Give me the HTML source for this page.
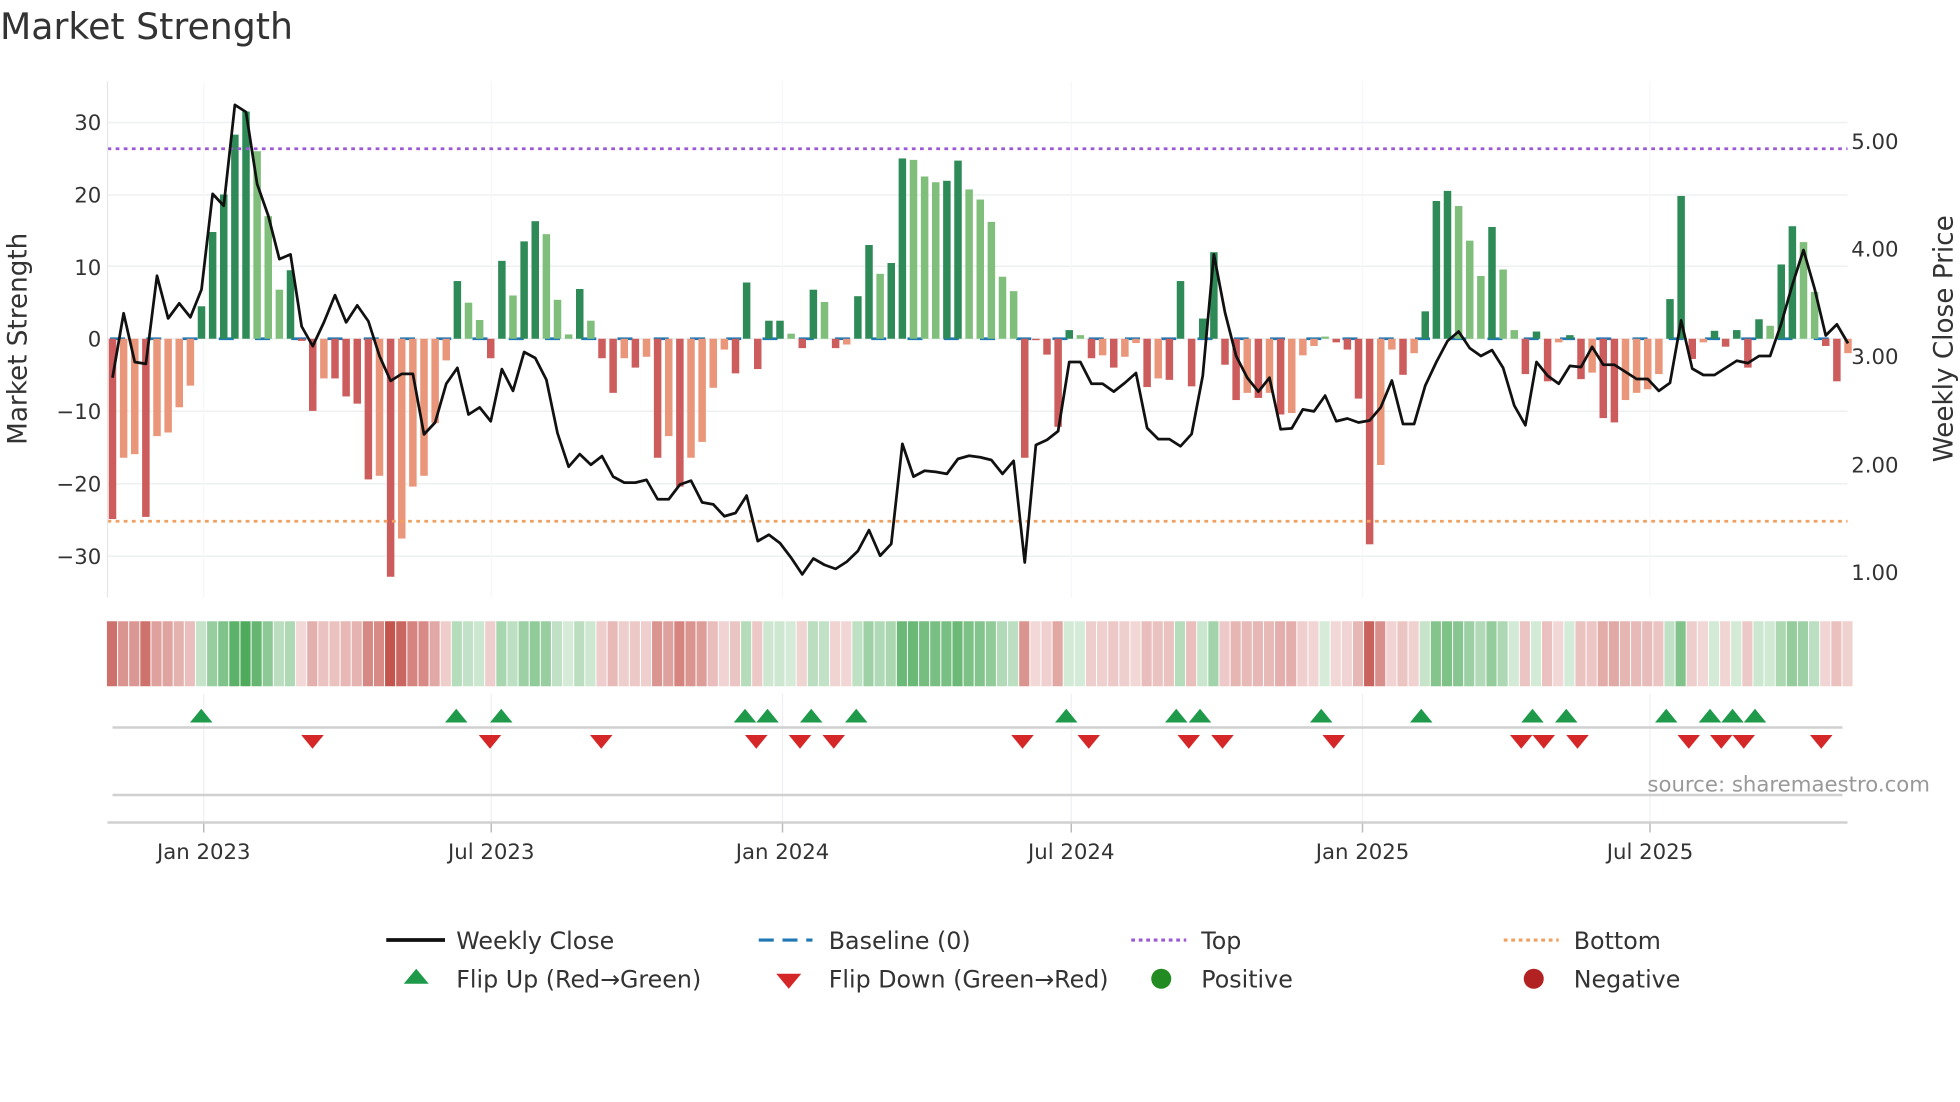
<!DOCTYPE html>
<html><head><meta charset="utf-8">
<style>
html,body{margin:0;padding:0;background:#fff;}
svg{display:block;}
text{font-family:"DejaVu Sans","Liberation Sans",sans-serif;fill:#333;}
</style></head>
<body>
<svg id="s" width="1960" height="1102" viewBox="0 0 1568 881.6" xmlns="http://www.w3.org/2000/svg">
<text x="0" y="31" font-size="29">Market Strength</text>
<g id="grid"></g>
<g id="bars"></g>
<g id="heat"></g>
<g id="marks"></g>
<line x1="86" y1="65" x2="86" y2="478" stroke="#e6e6e6" stroke-width="1"/>
<g font-size="17" text-anchor="end">
<text x="81" y="104">30</text>
<text x="81" y="162">20</text>
<text x="81" y="220">10</text>
<text x="81" y="277">0</text>
<text x="81" y="335">−10</text>
<text x="81" y="393">−20</text>
<text x="81" y="451">−30</text>
</g>
<g font-size="17">
<text x="1481" y="119">5.00</text>
<text x="1481" y="205">4.00</text>
<text x="1481" y="291">3.00</text>
<text x="1481" y="378">2.00</text>
<text x="1481" y="464">1.00</text>
</g>
<text font-size="21" transform="translate(21,271) rotate(-90)" text-anchor="middle">Market Strength</text>
<text font-size="21" transform="translate(1562,271) rotate(-90)" text-anchor="middle">Weekly Close Price</text>
<line x1="90" y1="582" x2="1474" y2="582" stroke="#d0d0d0" stroke-width="2"/>
<line x1="90" y1="636" x2="1474" y2="636" stroke="#d0d0d0" stroke-width="2"/>
<line x1="86" y1="658" x2="1478" y2="658" stroke="#d0d0d0" stroke-width="2"/>
<text x="1544" y="633" font-size="17" text-anchor="end" style="fill:#999">source: sharemaestro.com</text>
<g font-size="17" text-anchor="middle">
<text x="163" y="687">Jan 2023</text>
<text x="393" y="687">Jul 2023</text>
<text x="626" y="687">Jan 2024</text>
<text x="857" y="687">Jul 2024</text>
<text x="1090" y="687">Jan 2025</text>
<text x="1320" y="687">Jul 2025</text>
</g>
<g font-size="19">
<line x1="309" y1="752" x2="356" y2="752" stroke="#111" stroke-width="3"/>
<text x="365" y="759">Weekly Close</text>
<line x1="607" y1="752" x2="650" y2="752" stroke="#1f77b4" stroke-width="2.5" stroke-dasharray="12,7"/>
<text x="663" y="759">Baseline (0)</text>
<line x1="905" y1="752" x2="949" y2="752" stroke="#9b59d6" stroke-width="2.5" stroke-dasharray="3,3"/>
<text x="961" y="759">Top</text>
<line x1="1203" y1="752" x2="1247" y2="752" stroke="#f0a060" stroke-width="2.5" stroke-dasharray="3,3"/>
<text x="1259" y="759">Bottom</text>
<polygon points="333,775 323,787 343,787" fill="#1f9a4b"/>
<text x="365" y="790">Flip Up (Red→Green)</text>
<polygon points="631,791 621,779 641,779" fill="#d62728"/>
<text x="663" y="790">Flip Down (Green→Red)</text>
<circle cx="929" cy="783" r="8" fill="#228b22"/>
<text x="961" y="790">Positive</text>
<circle cx="1227" cy="783" r="8" fill="#b22222"/>
<text x="1259" y="790">Negative</text>
</g>
</svg>
<script>
var NS="http://www.w3.org/2000/svg";
function el(t,a,p){var e=document.createElementNS(NS,t);for(var k in a)e.setAttribute(k,a[k]);document.getElementById(p).appendChild(e);return e;}
var B=[[-25,1],[-16.5,0],[-16,0],[-24.7,1],[-13.5,0],[-13,0],[-9.5,0],[-6.5,0],[4.5,1],[14.8,1],[20,1],[28.3,1],[31.5,1],[26,0],[17,0],[6.8,0],[9.5,1],[-0.3,1],[-10,1],[-5.5,0],[-5.5,1],[-8,1],[-9,1],[-19.5,1],[-19,0],[-33,1],[-27.7,0],[-20.5,0],[-19,0],[-11.7,0],[-3,0],[8,1],[5,0],[2.6,0],[-2.7,1],[10.8,1],[6,0],[13.5,1],[16.3,1],[14.5,0],[5.4,0],[0.6,0],[6.9,1],[2.5,0],[-2.7,1],[-7.5,1],[-2.7,0],[-4,1],[-2.5,0],[-16.5,1],[-13.5,0],[-20.5,1],[-16.5,0],[-14.3,0],[-6.8,0],[-1.5,0],[-4.8,1],[7.8,1],[-4.2,1],[2.5,1],[2.5,1],[0.7,0],[-1.3,1],[6.8,1],[5.1,0],[-1.3,1],[-0.8,0],[5.9,1],[13,1],[9,0],[10.5,1],[25,1],[24.8,0],[22.5,0],[21.7,0],[21.9,1],[24.7,1],[20.7,0],[19.3,0],[16.2,0],[8.6,0],[6.6,0],[-16.5,1],[-0.2,1],[-2.2,1],[-12.2,1],[1.2,1],[0.5,0],[-2.7,1],[-2.3,0],[-4,1],[-2.5,0],[-0.6,0],[-6.7,1],[-5.5,0],[-5.7,1],[8,1],[-6.6,1],[2.8,1],[12,1],[-3.6,1],[-8.5,1],[-7.5,0],[-8.2,1],[-7.5,0],[-10.5,1],[-10.3,0],[-2.3,0],[-1,0],[0.3,0],[-0.5,1],[-1.5,1],[-8.3,1],[-28.5,1],[-17.5,0],[-1.5,0],[-5,1],[-2,0],[3.8,1],[19.1,1],[20.5,1],[18.4,0],[13.6,0],[8.7,0],[15.5,1],[9.6,0],[1.2,0],[-4.9,1],[1,1],[-5.9,1],[-0.5,0],[0.5,1],[-5.6,1],[-4.7,0],[-11,1],[-11.6,1],[-8.5,0],[-7.5,0],[-7,0],[-4.9,0],[5.5,1],[19.8,1],[-2.8,1],[-0.5,0],[1.1,1],[-1.1,1],[1.2,1],[-4,1],[2.7,1],[1.8,0],[10.3,1],[15.6,1],[13.4,0],[6.5,0],[-1,1],[-5.9,1],[-2,0]];
var L=[955,792,915,920,697,805,767,802,732,490,520,265,283,465,545,655,643,825,875,815,746,815,772,812,900,963,945,945,1098,1068,970,930,1048,1030,1065,933,988,890,905,960,1095,1180,1148,1175,1153,1205,1220,1220,1213,1262,1262,1225,1215,1270,1275,1305,1297,1253,1368,1352,1373,1410,1452,1412,1428,1438,1420,1393,1340,1405,1375,1122,1205,1190,1193,1198,1160,1152,1156,1163,1198,1165,1422,1125,1112,1090,915,915,970,970,990,968,943,1082,1110,1110,1128,1097,950,643,790,900,955,990,955,1085,1083,1035,1040,1000,1065,1058,1068,1063,1030,962,1072,1072,975,915,862,838,880,900,885,930,1025,1075,915,950,970,925,928,877,922,922,940,958,958,988,968,810,932,948,948,930,912,918,900,900,818,720,632,730,848,820,868];
function X(i){return 90+i*8.9;}
var Y0=271,U=5.77;
[98,156,213,271,329,387,445].forEach(function(y){el("line",{x1:86,x2:1478,y1:y,y2:y,stroke:"#eef0f2","stroke-width":1.2},"grid");});
[163,393,626,857,1090,1320].forEach(function(x){el("line",{x1:x,x2:x,y1:65,y2:478,stroke:"#f6f7f8","stroke-width":1},"grid");el("line",{x1:x,x2:x,y1:555,y2:658,stroke:"#eef0f2","stroke-width":1},"grid");el("line",{x1:x,x2:x,y1:658,y2:666,stroke:"#bbb","stroke-width":1.2},"grid");});
var C={g1:"#2e8b57",g0:"#7fbf7b",r1:"#cd5c5c",r0:"#e9967a"};
el("line",{x1:88,x2:1478,y1:Y0,y2:Y0,stroke:"#1f77b4","stroke-width":2.2,"stroke-dasharray":"12,17"},"bars");
B.forEach(function(b,i){var v=b[0],h=Math.abs(v)*U;var col=v>=0?(b[1]?C.g1:C.g0):(b[1]?C.r1:C.r0);
el("rect",{x:X(i)-3,y:v>=0?Y0-h:Y0,width:6,height:Math.max(h,0.5),fill:col},"bars");
var t=0.22+0.78*Math.min(1,Math.abs(v)/32);var base=v>=0?[76,170,90]:[196,84,78];
var c=base.map(function(q){return Math.round(255-(255-q)*t);});
el("rect",{x:X(i)-4.45,y:497,width:8.1,height:52,fill:"rgb("+c.join(",")+")"},"heat");});
el("line",{x1:86,x2:1478,y1:119,y2:119,stroke:"#9b59d6","stroke-width":2.2,"stroke-dasharray":"3,3.5"},"bars");
el("line",{x1:86,x2:1478,y1:417,y2:417,stroke:"#f0a060","stroke-width":2.2,"stroke-dasharray":"3,3.5"},"bars");
var pts=L.map(function(y,i){return X(i).toFixed(1)+","+(y/3.16).toFixed(1);}).join(" ");
el("polyline",{points:pts,fill:"none",stroke:"#111","stroke-width":2.2,"stroke-linejoin":"round"},"bars");
[161,365,401,596,614,649,685,853,941,960,1057,1137,1226,1253,1333,1368,1386,1404].forEach(function(x){el("polygon",{points:x+",567 "+(x-9)+",578 "+(x+9)+",578",fill:"#1f9a4b"},"marks");});
[250,392,481,605,640,667,818,871,951,978,1067,1217,1235,1262,1351,1377,1395,1457].forEach(function(x){el("polygon",{points:x+",599 "+(x-9)+",588 "+(x+9)+",588",fill:"#d62728"},"marks");});
</script>
</body></html>
